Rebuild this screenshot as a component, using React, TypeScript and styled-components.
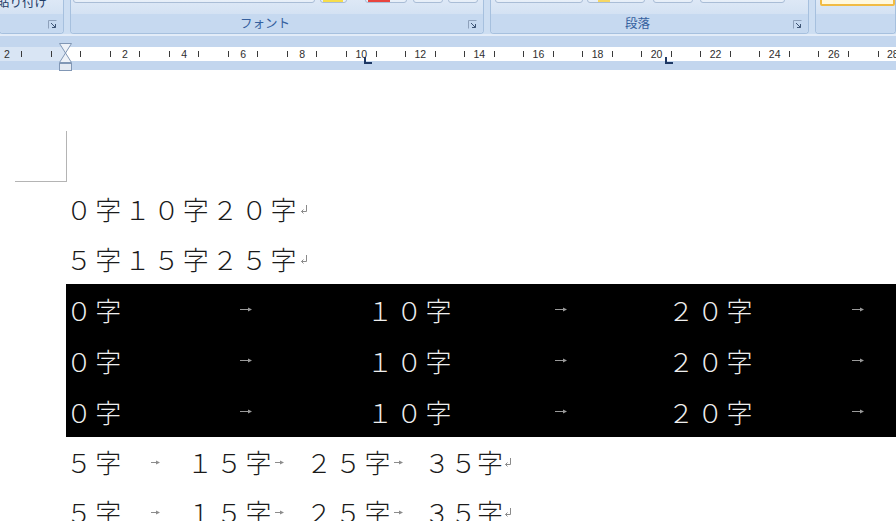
import styled, { createGlobalStyle } from "styled-components";

const CJK = `"Noto Sans CJK JP", "Noto Sans", sans-serif`;
const HALF = 14.775; // ruler: half a character

interface StubSpec {
  ml: number;
  w: number;
  swatch?: { color: string; left: number; w: number };
}

const fontStubs: StubSpec[] = [
  { ml: 2, w: 242 },
  { ml: 5, w: 27, swatch: { color: "#f6dd4c", left: 2, w: 20 } },
  { ml: 18, w: 42, swatch: { color: "#e8453f", left: 2, w: 22 } },
  { ml: 6, w: 30 },
  { ml: 5, w: 30 },
];

const paraStubs: StubSpec[] = [
  { ml: 4, w: 88 },
  { ml: 4, w: 58, swatch: { color: "#f6d764", left: 10, w: 12 } },
  { ml: 8, w: 40 },
  { ml: 7, w: 85 },
];

const Launcher = () => (
  <svg width="9" height="9" viewBox="0 0 9 9">
    <path d="M0.5 8.5V0.5H8.5" stroke="#8ea1bb" fill="none" />
    <path d="M3 3L7.5 7.5M7.5 4V7.5H4" stroke="#3e5575" fill="none" />
  </svg>
);

const TabArrow = ({ w, color }: { w: number; color: string }) => (
  <svg width={w} height="5" viewBox={`0 0 ${w} 5`}>
    <path d={`M0 2.5H${w - 3}`} stroke={color} strokeWidth="1" />
    <path d={`M${w - 4} 0.5L${w} 2.5L${w - 4} 4.5Z`} fill={color} />
  </svg>
);

const ReturnMark = () => (
  <svg width="8" height="9" viewBox="0 0 8 9">
    <path d="M6.5 0V6.5H1.5" stroke="#8a8a8a" fill="none" />
    <path d="M3.5 4.5L1.5 6.5L3.5 8.5" stroke="#8a8a8a" fill="none" />
  </svg>
);

const IndentMarker = () => (
  <svg width="13" height="28" viewBox="0 0 13 28">
    <path d="M0.5 0.5H12.5L6.5 10Z" fill="#eef2f8" stroke="#8197b5" />
    <path d="M6.5 10L12.5 19.5H0.5Z" fill="#eef2f8" stroke="#8197b5" />
    <rect x="0.5" y="20.5" width="12" height="7" fill="#e3e9f2" stroke="#8197b5" />
  </svg>
);

const rulerMarks = Array.from({ length: 62 }, (_, i) => i - 4);

export default function App() {
  return (
    <Screen>
      <GlobalStyle />
      <Ribbon>
        <Group $w={65} $ml={-1}>
          <GroupBody>
            <PasteLabel>貼り付け</PasteLabel>
          </GroupBody>
          <GroupFoot>
            <span />
            <LauncherCell>
              <Launcher />
            </LauncherCell>
          </GroupFoot>
        </Group>
        <Group $w={414}>
          <GroupBody>
            {fontStubs.map((s, i) => (
              <Stub key={i} $ml={s.ml} $w={s.w}>
                {s.swatch && <Swatch $color={s.swatch.color} $left={s.swatch.left} $w={s.swatch.w} />}
              </Stub>
            ))}
          </GroupBody>
          <GroupFoot>
            <GroupLabel>フォント</GroupLabel>
            <LauncherCell>
              <Launcher />
            </LauncherCell>
          </GroupFoot>
        </Group>
        <Group $w={319}>
          <GroupBody>
            {paraStubs.map((s, i) => (
              <Stub key={i} $ml={s.ml} $w={s.w}>
                {s.swatch && <Swatch $color={s.swatch.color} $left={s.swatch.left} $w={s.swatch.w} />}
              </Stub>
            ))}
          </GroupBody>
          <GroupFoot>
            <GroupLabel>段落</GroupLabel>
            <LauncherCell>
              <Launcher />
            </LauncherCell>
          </GroupFoot>
        </Group>
        <Group>
          <GroupBody>
            <Gallery />
          </GroupBody>
          <GroupFoot />
        </Group>
      </Ribbon>

      <RulerBar>
        <RulerStrip>
          <Scale>
            {rulerMarks.map((k) => (
              <Mark key={k}>
                {k % 2 !== 0 ? <Tick /> : k % 4 === 0 && k !== 0 ? Math.abs(k / 2) : null}
              </Mark>
            ))}
          </Scale>
        </RulerStrip>
        <IndentHandle>
          <IndentMarker />
        </IndentHandle>
        <TabStop $x={364} />
        <TabStop $x={665} />
      </RulerBar>

      <Page>
        <Corner />
        <Body>
          <Line>
            <Chars>０字１０字２０字</Chars>
            <ReturnMark />
          </Line>
          <Line>
            <Chars>５字１５字２５字</Chars>
            <ReturnMark />
          </Line>
          <Highlight>
            {[0, 1, 2].map((r) => (
              <Line key={r} $dark>
                <Seg $w={301}>
                  <Chars>０字</Chars>
                  <Tab>
                    <TabArrow w={12} color="#9a9a9a" />
                  </Tab>
                </Seg>
                <Seg $w={301}>
                  <Chars>１０字</Chars>
                  <Tab>
                    <TabArrow w={12} color="#9a9a9a" />
                  </Tab>
                </Seg>
                <Seg $w={293}>
                  <Chars>２０字</Chars>
                  <Tab>
                    <TabArrow w={12} color="#9a9a9a" />
                  </Tab>
                </Seg>
              </Line>
            ))}
          </Highlight>
          {[0, 1].map((r) => (
            <Line key={r}>
              <Seg $w={121}>
                <Chars>５字</Chars>
                <Tab>
                  <TabArrow w={9} color="#8c8c8c" />
                </Tab>
              </Seg>
              <Seg $w={119}>
                <Chars>１５字</Chars>
                <Tab $lead>
                  <TabArrow w={9} color="#8c8c8c" />
                </Tab>
              </Seg>
              <Seg $w={118}>
                <Chars>２５字</Chars>
                <Tab $lead>
                  <TabArrow w={9} color="#8c8c8c" />
                </Tab>
              </Seg>
              <Chars $tight>３５字</Chars>
              <ReturnMark />
            </Line>
          ))}
        </Body>
      </Page>
    </Screen>
  );
}

const GlobalStyle = createGlobalStyle`
  html, body {
    margin: 0;
    padding: 0;
    background: #fff;
    overflow: hidden;
  }
  body {
    font-family: ${CJK};
  }
`;

const Screen = styled.div`
  width: 896px;
  height: 521px;
  overflow: hidden;
  display: flex;
  flex-direction: column;
  background: #fff;
`;

const Ribbon = styled.div`
  flex: none;
  display: flex;
  gap: 6px;
  height: 34px;
  background: #cddef2;
  border-bottom: 2px solid #e3ecf8;
`;

const Group = styled.div<{ $w?: number; $ml?: number }>`
  flex: ${(p) => (p.$w ? `0 0 ${p.$w}px` : "1 1 auto")};
  margin-left: ${(p) => p.$ml ?? 0}px;
  display: flex;
  flex-direction: column;
  box-sizing: border-box;
  border: 1px solid #a6c0de;
  border-top: none;
  border-radius: 0 0 4px 4px;
  box-shadow: inset 1px 0 0 #e6eef9, inset -1px 0 0 #e6eef9;
  overflow: hidden;
`;

const GroupBody = styled.div`
  height: 14px;
  display: flex;
  align-items: flex-start;
  overflow: hidden;
  background: linear-gradient(#dde8f6, #d4e2f3);
`;

const GroupFoot = styled.div`
  flex: 1;
  display: grid;
  grid-template-columns: 1fr 16px;
  align-items: center;
  background: #c6d9f0;
`;

const GroupLabel = styled.span`
  padding-right: 8px;
  text-align: center;
  font-family: ${CJK};
  font-size: 12.5px;
  line-height: 1;
  color: #35609e;
`;

const LauncherCell = styled.span`
  display: flex;
  align-items: center;
  padding-left: 1px;
  padding-top: 1px;
`;

const PasteLabel = styled.div`
  margin: -5px 0 0 -3px;
  font-family: ${CJK};
  font-size: 12.5px;
  line-height: 14px;
  color: #1f3c66;
  white-space: nowrap;
`;

const Stub = styled.span<{ $ml: number; $w: number }>`
  position: relative;
  flex: none;
  margin: -13px 0 0 ${(p) => p.$ml}px;
  width: ${(p) => p.$w}px;
  height: 16px;
  box-sizing: border-box;
  border: 1px solid #a9bdd6;
  border-radius: 3px;
  background: linear-gradient(#f7faff, #e6eef8);
  overflow: hidden;
`;

const Swatch = styled.span<{ $color: string; $left: number; $w: number }>`
  position: absolute;
  bottom: 0;
  left: ${(p) => p.$left}px;
  width: ${(p) => p.$w}px;
  height: 4px;
  background: ${(p) => p.$color};
`;

const Gallery = styled.span`
  flex: 1;
  margin: -14px 0 0 4px;
  height: 20px;
  box-sizing: border-box;
  border: 2px solid #f1bb43;
  border-radius: 2px;
  background: #fff8de;
`;

const RulerBar = styled.div`
  position: relative;
  flex: none;
  height: 34px;
  box-sizing: border-box;
  padding-top: 11px;
  background: #c3d6ee;
`;

const RulerStrip = styled.div`
  height: 14px;
  display: flex;
  overflow: hidden;
  background: linear-gradient(90deg, #d9e5f4 0 66px, #fff 66px);
`;

const Scale = styled.div`
  display: flex;
  margin-left: -0.5px;
`;

const Mark = styled.span`
  flex: 0 0 ${HALF}px;
  display: flex;
  justify-content: center;
  align-items: center;
  font-family: "Liberation Sans", Arial, sans-serif;
  font-size: 10.5px;
  color: #2e2e2e;
  white-space: nowrap;
`;

const Tick = styled.i`
  width: 1px;
  height: 6px;
  background: #3a3a3a;
`;

const IndentHandle = styled.div`
  position: absolute;
  left: 59px;
  top: 7px;
  display: flex;
`;

const TabStop = styled.span<{ $x: number }>`
  position: absolute;
  left: ${(p) => p.$x}px;
  top: 21px;
  width: 8px;
  height: 7px;
  box-sizing: border-box;
  border-left: 2px solid #1c3764;
  border-bottom: 2px solid #1c3764;
`;

const Page = styled.div`
  flex: 1;
  background: #fff;
`;

const Corner = styled.div`
  margin: 61px 0 0 15px;
  width: 52px;
  height: 51px;
  box-sizing: border-box;
  border-right: 1px solid #b4b4b4;
  border-bottom: 1px solid #b4b4b4;
`;

const Body = styled.div`
  margin-top: 2px;
  font-family: ${CJK};
  font-size: 26px;
  font-weight: 300;
  color: #1a1a1a;
`;

const Line = styled.div<{ $dark?: boolean }>`
  display: flex;
  align-items: center;
  height: ${(p) => (p.$dark ? 51 : 50)}px;
  padding-left: ${(p) => (p.$dark ? 0 : 66)}px;
  white-space: nowrap;
`;

const Highlight = styled.div`
  margin-left: 66px;
  background: #000;
  color: #eeeeee;
`;

const Chars = styled.span<{ $tight?: boolean }>`
  letter-spacing: ${(p) => (p.$tight ? 0.5 : 3.2)}px;
  line-height: 1;
`;

const Seg = styled.span<{ $w: number }>`
  flex: 0 0 ${(p) => p.$w}px;
  display: flex;
  align-items: center;
`;

const Tab = styled.span<{ $lead?: boolean }>`
  flex: 1;
  display: flex;
  align-items: center;
  justify-content: ${(p) => (p.$lead ? "flex-start" : "center")};
`;
